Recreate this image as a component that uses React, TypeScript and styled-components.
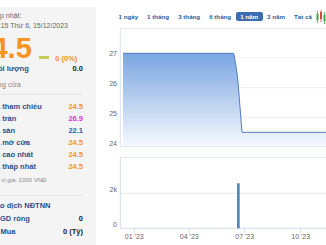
import React from "react";
import styled, { createGlobalStyle } from "styled-components";

const GlobalStyle = createGlobalStyle`
  html, body {
    margin: 0;
    padding: 0;
    background: #fff;
    overflow: hidden;
  }
  body {
    font-family: "Liberation Sans", Arial, sans-serif;
  }
`;

const tabs = ["1 ngày", "1 tháng", "3 tháng", "6 tháng", "1 năm", "3 năm", "Tất cả"];

const priceRows = [
  { label: "Giá tham chiếu", value: "24.5", color: "#f7931e" },
  { label: "Giá trần", value: "26.9", color: "#e22ee2" },
  { label: "Giá sàn", value: "22.1", color: "#2a5ea8" },
  { label: "Giá mở cửa", value: "24.5", color: "#f7931e" },
  { label: "Giá cao nhất", value: "24.5", color: "#f7931e" },
  { label: "Giá thấp nhất", value: "24.5", color: "#f7931e" },
];

const CandleIcon = () => (
  <svg width="10" height="14" viewBox="0 0 10 14">
    <line x1="1.5" y1="1" x2="1.5" y2="13" stroke="#3aa64a" strokeWidth="0.8" />
    <rect x="0.5" y="4" width="2" height="6" fill="#3aa64a" />
    <line x1="5" y1="0" x2="5" y2="12" stroke="#d9413a" strokeWidth="0.8" />
    <rect x="4" y="2" width="2" height="7" fill="#d9413a" />
    <line x1="8.5" y1="2" x2="8.5" y2="14" stroke="#3aa64a" strokeWidth="0.8" />
    <rect x="7.5" y="5" width="2" height="6" fill="#3aa64a" />
  </svg>
);

const Chart = () => (
  <ChartSvg width="232" height="219" viewBox="94 26 232 219">
    <defs>
      <linearGradient id="area" x1="0" y1="0" x2="0" y2="1">
        <stop offset="0" stopColor="#7aa6e2" />
        <stop offset="1" stopColor="#f6f9fd" />
      </linearGradient>
    </defs>

    {/* price chart */}
    {[57.7, 87.7, 117.3].map((y) => (
      <line key={y} x1="118" y1={y} x2="330" y2={y} stroke="#eeeeee" strokeWidth="1" />
    ))}
    <path
      d="M121,53.3 L231.7,53.3 Q235,70 236,82 L240,132.3 L330,132.3 L330,146.7 L121,146.7 Z"
      fill="url(#area)"
    />
    <path
      d="M121,53.3 L231.7,53.3 Q235,70 236,82 L240,132.3 L330,132.3"
      fill="none"
      stroke="#4f80c2"
      strokeWidth="1"
    />
    <line x1="118" y1="28.3" x2="330" y2="28.3" stroke="#e4e7eb" />
    <line x1="118.3" y1="28" x2="118.3" y2="147" stroke="#dbe3ee" />
    <line x1="118" y1="146.7" x2="330" y2="146.7" stroke="#e6e6e6" />
    {[
      ["27", 53],
      ["26", 83],
      ["25", 113],
      ["24", 143],
    ].map(([t, y]) => (
      <AxisText key={t} x="115" y={Number(y) + 2.5} textAnchor="end">
        {t}
      </AxisText>
    ))}

    {/* volume chart */}
    <line x1="118" y1="193.3" x2="330" y2="193.3" stroke="#e8e8e8" />
    <line x1="118" y1="157.3" x2="330" y2="157.3" stroke="#dbe3ee" />
    <line x1="118.3" y1="157" x2="118.3" y2="228.5" stroke="#d3dcea" />
    <line x1="118" y1="228.3" x2="330" y2="228.3" stroke="#d3dcea" />
    <rect x="235" y="183.3" width="2.7" height="45" fill="#5a86b4" />
    <AxisText x="115" y="191.8" textAnchor="end">
      2k
    </AxisText>
    <AxisText x="115" y="226.5" textAnchor="end">
      0
    </AxisText>
    {[
      ["01 '23", 132.3],
      ["04 '23", 187.3],
      ["07 '23", 242.7],
      ["10 '23", 298.7],
    ].map(([t, x]) => (
      <g key={String(t)}>
        <line x1={x} y1="228.3" x2={x} y2="233" stroke="#d3dcea" />
        <AxisText x={x} y="239.2" textAnchor="middle">
          {t}
        </AxisText>
      </g>
    ))}
  </ChartSvg>
);

export default function App() {
  return (
    <>
      <GlobalStyle />
      <Page>
        <InfoPanel>
          <Muted>Cập nhật:</Muted>
          <Muted>14:15 Thứ 6, 15/12/2023</Muted>
          <PriceRow>
            <BigPrice>24.5</BigPrice>
            <ChangeBar />
            <Change>0 (0%)</Change>
          </PriceRow>
          <Row>
            <Label>Khối lượng</Label>
            <Value color="#222">0.0</Value>
          </Row>
          <Status>Đóng cửa</Status>
          <Rows>
            {priceRows.map((r) => (
              <Row key={r.label}>
                <Label>{r.label}</Label>
                <Value color={r.color}>{r.value}</Value>
              </Row>
            ))}
          </Rows>
          <Unit>Đơn vị giá: 1000 VNĐ</Unit>
          <Section>
            <Label>Giao dịch NĐTNN</Label>
            <Row>
              <Label>KL GD ròng</Label>
              <Value color="#222">0</Value>
            </Row>
            <Row>
              <Label>GT Mua</Label>
              <Value color="#222">0 (Tỷ)</Value>
            </Row>
          </Section>
        </InfoPanel>

        <ChartColumn>
          <TabBar>
            {tabs.map((t) => (
              <Tab key={t} active={t === "1 năm"}>
                {t}
              </Tab>
            ))}
            <CandleIcon />
          </TabBar>
          <Chart />
        </ChartColumn>
      </Page>
    </>
  );
}

const Page = styled.div`
  display: flex;
  width: 326px;
  height: 245px;
  overflow: hidden;
`;

const InfoPanel = styled.div`
  flex: 0 0 auto;
  width: 95px;
  margin-left: -14px;
  margin-top: 7px;
  padding: 4px 13px 0 2px;
  background: #f4f4f4;
  display: flex;
  flex-direction: column;
`;

const Muted = styled.div`
  font-size: 7px;
  line-height: 10px;
  color: #666;
  white-space: nowrap;
  margin-left: 3px;
`;

const PriceRow = styled.div`
  display: flex;
  align-items: flex-end;
  margin-top: 3px;
  margin-left: -12.7px;
  height: 29px;
`;

const BigPrice = styled.div`
  font-size: 29px;
  line-height: 29px;
  font-weight: bold;
  color: #f7931e;
`;

const ChangeBar = styled.div`
  width: 10px;
  height: 3px;
  background: #c6ca5c;
  margin: 0 6px 4.5px 7.5px;
`;

const Change = styled.div`
  font-size: 7.5px;
  line-height: 9px;
  font-weight: bold;
  color: #f7931e;
`;

const Row = styled.div`
  display: flex;
  justify-content: space-between;
  align-items: center;
  height: 12px;
  white-space: nowrap;
`;

const Label = styled.span`
  font-size: 7.5px;
  line-height: 12px;
  font-weight: bold;
  color: #2b4f8c;
`;

const Value = styled.span<{ color: string }>`
  font-size: 7.5px;
  line-height: 12px;
  font-weight: bold;
  color: ${(p) => p.color};
`;

const Status = styled.div`
  font-size: 7.5px;
  line-height: 12px;
  color: #888;
  margin-top: 4px;
  padding-bottom: 3px;
  border-bottom: 1px solid #e4e4e4;
`;

const Rows = styled.div`
  margin-top: 6px;
`;

const Unit = styled.div`
  font-size: 6px;
  line-height: 8px;
  color: #888;
  margin-top: 3px;
  padding-bottom: 11px;
  border-bottom: 1px solid #e4e4e4;
  white-space: nowrap;
`;

const Section = styled.div`
  margin-top: 4px;
  display: flex;
  flex-direction: column;
  gap: 1px;
`;

const ChartColumn = styled.div`
  flex: 1;
  display: flex;
  flex-direction: column;
`;

const TabBar = styled.div`
  display: flex;
  align-items: center;
  margin-top: 12px;
  padding-left: 18px;
  height: 9px;
  white-space: nowrap;
`;

const Tab = styled.span<{ active?: boolean }>`
  font-size: 6.2px;
  line-height: 9px;
  font-weight: bold;
  padding: 0 4.5px;
  border-radius: 2px;
  color: ${(p) => (p.active ? "#fff" : "#2d5c9c")};
  background: ${(p) => (p.active ? "#3c6db2" : "transparent")};
`;

const ChartSvg = styled.svg`
  display: block;
  margin-top: 5px;
  flex: 0 0 auto;
`;

const AxisText = styled.text`
  font-family: "Liberation Sans", Arial, sans-serif;
  font-size: 7px;
  fill: #666;
`;
